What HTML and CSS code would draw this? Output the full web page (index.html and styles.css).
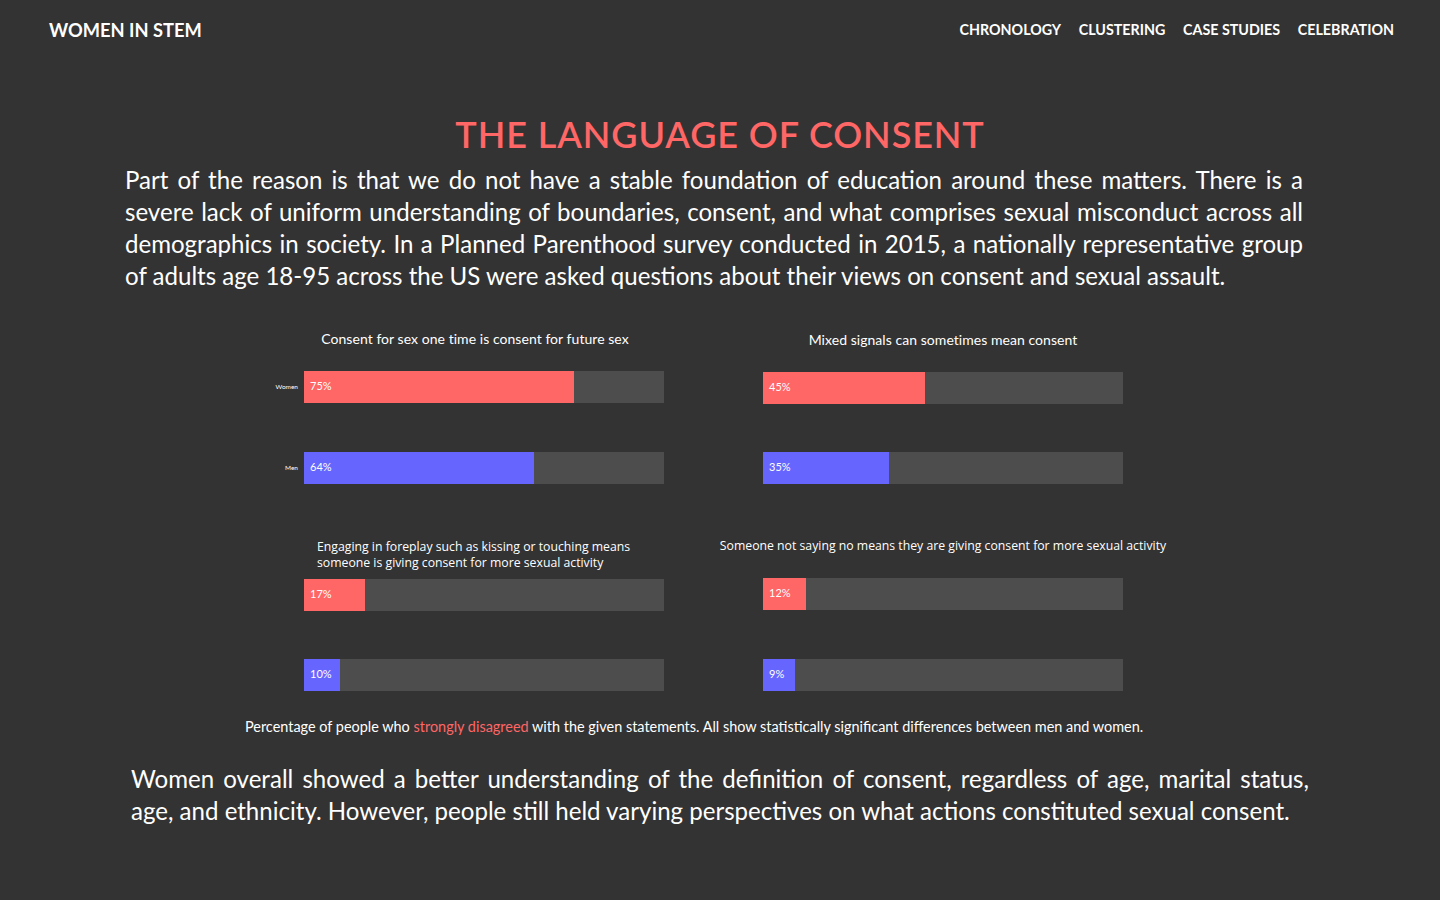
FILE: index.html
```html
<!DOCTYPE html>
<html lang="en">
<head>
    <meta charset="UTF-8">
    <meta name="viewport" content="width=device-width, initial-scale=1.0">
    <title>The Language of Consent</title>
    <link rel="stylesheet" href="styles.css">
</head>
<body>
    <nav class="nav">
        <a class="brand" href="#">WOMEN IN STEM</a>
        <div class="nav-links">
            <a href="#">CHRONOLOGY</a>
            <a href="#">CLUSTERING</a>
            <a href="#">CASE STUDIES</a>
            <a href="#">CELEBRATION</a>
        </div>
    </nav>

    <main>
        <h1 class="title">THE LANGUAGE OF CONSENT</h1>
        <p class="lead">Part of the reason is that we do not have a stable foundation of education around these matters. There is a severe lack of uniform understanding of boundaries, consent, and what comprises sexual misconduct across all demographics in society. In a Planned Parenthood survey conducted in 2015, a nationally representative group of adults age 18-95 across the US were asked questions about their views on consent and sexual assault.</p>

        <section class="charts">
            <div class="chart chart-top">
                <h2 class="chart-title title-shift">Consent for sex one time is consent for future sex</h2>
                <div class="bar-row">
                    <span class="bar-label">Women</span>
                    <div class="track"><div class="fill red" style="width: 75%">75%</div></div>
                </div>
                <div class="bar-row">
                    <span class="bar-label">Men</span>
                    <div class="track"><div class="fill blue" style="width: 64%">64%</div></div>
                </div>
            </div>
            <div class="chart chart-top chart-low">
                <h2 class="chart-title">Mixed signals can sometimes mean consent</h2>
                <div class="bar-row">
                    <span class="bar-label"></span>
                    <div class="track"><div class="fill red" style="width: 45%">45%</div></div>
                </div>
                <div class="bar-row">
                    <span class="bar-label"></span>
                    <div class="track"><div class="fill blue" style="width: 35%">35%</div></div>
                </div>
            </div>
            <div class="chart chart-bottom">
                <h2 class="chart-title title-left">Engaging in foreplay such as kissing or touching means<br>someone is giving consent for more sexual activity</h2>
                <div class="bar-row">
                    <span class="bar-label"></span>
                    <div class="track"><div class="fill red" style="width: 17%">17%</div></div>
                </div>
                <div class="bar-row">
                    <span class="bar-label"></span>
                    <div class="track"><div class="fill blue" style="width: 10%">10%</div></div>
                </div>
            </div>
            <div class="chart chart-bottom chart-wide">
                <h2 class="chart-title">Someone not saying no means they are giving consent for more sexual activity</h2>
                <div class="bar-row">
                    <span class="bar-label"></span>
                    <div class="track"><div class="fill red" style="width: 12%">12%</div></div>
                </div>
                <div class="bar-row">
                    <span class="bar-label"></span>
                    <div class="track"><div class="fill blue" style="width: 9%">9%</div></div>
                </div>
            </div>
        </section>

        <p class="caption">Percentage of people who <span class="accent">strongly disagreed</span> with the given statements. All show statistically significant differences between men and women.</p>

        <p class="lead lead-end">Women overall showed a better understanding of the definition of consent, regardless of age, marital status, age, and ethnicity. However, people still held varying perspectives on what actions constituted sexual consent.</p>
    </main>
</body>
</html>
```

FILE: styles.css
```css
* {
    box-sizing: border-box;
}
body {
    margin: 0;
    height: 900px;
    overflow: hidden;
    background-color: #333333;
    color: #ffffff;
    font-family: Lato, sans-serif;
}
a {
    color: #ffffff;
    text-decoration: none;
}
.nav {
    display: flex;
    justify-content: space-between;
    align-items: center;
    height: 59px;
    padding: 0 46px 0 49px;
}
.brand {
    font-size: 18.3px;
    font-weight: 700;
}
.nav-links {
    display: flex;
    gap: 17.6px;
    font-size: 14.3px;
    font-weight: 700;
}
.title {
    margin: 52px 0 0;
    color: #ff6666;
    font-size: 36px;
    font-weight: 600;
    letter-spacing: 0.9px;
    line-height: 46px;
    text-align: center;
}
.lead {
    width: 1178px;
    margin: 7px 0 0 125px;
    font-size: 24.07px;
    line-height: 32px;
    text-align: justify;
}
.lead-end {
    margin: 26px 0 0 131px;
}
.charts {
    display: grid;
    grid-template-columns: 404px 404px;
    column-gap: 55px;
    row-gap: 54px;
    margin: 28px 0 0 260px;
}
.chart-top {
    padding-top: 9px;
}
.chart-low {
    margin-top: 1px;
}
.chart-title {
    margin: 0 -60px 22px -16px;
    font-size: 14px;
    font-weight: 400;
    line-height: 20px;
    letter-spacing: 0.05px;
    text-align: center;
    white-space: nowrap;
}
.title-shift {
    margin-left: -25px;
    margin-right: -51px;
}
.chart-bottom .chart-title {
    margin-bottom: 24px;
    font-family: "Open Sans", sans-serif;
    font-size: 12.25px;
    letter-spacing: 0;
    line-height: 16px;
}
.chart-bottom .title-left {
    margin: 1px 0 8px 57px;
    text-align: left;
}
.bar-row {
    display: flex;
    align-items: center;
    gap: 6px;
}
.bar-row + .bar-row {
    margin-top: 49px;
}
.chart-bottom .bar-row + .bar-row {
    margin-top: 48px;
}
.chart-low .bar-row + .bar-row {
    margin-top: 48px;
}
.chart-wide .bar-row + .bar-row {
    margin-top: 49px;
}
.bar-label {
    width: 38px;
    margin-bottom: 2px;
    font-size: 6.5px;
    text-align: right;
}
.track {
    width: 360px;
    height: 32px;
    background-color: #4d4d4d;
}
.fill {
    height: 100%;
    padding-left: 6px;
    font-size: 11px;
    line-height: 30px;
}
.red {
    background-color: #ff6666;
}
.blue {
    background-color: #6666ff;
}
.caption {
    margin: 26px 0 0;
    padding-left: 245px;
    font-size: 14.45px;
    line-height: 20px;
}
.accent {
    color: #ff6666;
}
```
